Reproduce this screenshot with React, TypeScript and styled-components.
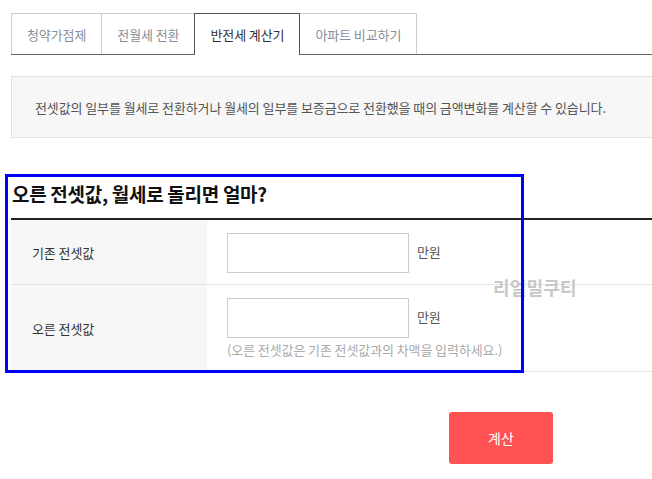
import React, { useState } from 'react'
import styled, { createGlobalStyle } from 'styled-components'

const GlobalStyle = createGlobalStyle`
    html, body {
        margin: 0;
        padding: 0;
        background: #fff;
        overflow: hidden;
    }
    body {
        font-family: "Noto Sans CJK KR", "Noto Sans", sans-serif;
        font-size: 13px;
        letter-spacing: -0.1px;
        color: #333;
    }
`

const tabs = ['청약가점제', '전월세 전환', '반전세 계산기', '아파트 비교하기']

export default function App() {
    const [active, setActive] = useState(2)

    return (
        <WPage>
            <GlobalStyle />
            <WTabBar>
                {tabs.map((name, i) => (
                    <WTab key={name} $active={i === active} onClick={() => setActive(i)}>
                        {name}
                    </WTab>
                ))}
            </WTabBar>

            <WInfoBox>
                전셋값의 일부를 월세로 전환하거나 월세의 일부를 보증금으로 전환했을 때의 금액변화를 계산할 수 있습니다.
            </WInfoBox>

            <WTitle>오른 전셋값, 월세로 돌리면 얼마?</WTitle>

            <WTable>
                <WRow>
                    <WLabelCell>기존 전셋값</WLabelCell>
                    <WValueCell>
                        <WInputLine>
                            <WInput type="text" />
                            <WUnit>만원</WUnit>
                        </WInputLine>
                    </WValueCell>
                </WRow>
                <WRow>
                    <WLabelCell>오른 전셋값</WLabelCell>
                    <WValueCell>
                        <WInputLine>
                            <WInput type="text" />
                            <WUnit>만원</WUnit>
                        </WInputLine>
                        <WHelp>(오른 전셋값은 기존 전셋값과의 차액을 입력하세요.)</WHelp>
                    </WValueCell>
                </WRow>
            </WTable>

            <WCalcButton>계산</WCalcButton>

            {/* 이미지 위 워터마크 / 파란 표시 박스 */}
            <WWatermark>리얼밀쿠티</WWatermark>
            <WHighlight />
        </WPage>
    )
}

const WPage = styled.div`
    position: relative;
    width: 980px;
    padding: 13px 0 40px 11px;
`

const WTabBar = styled.div`
    display: flex;
    align-items: flex-end;
    height: 41px;
    border-bottom: 1px solid #666;
`

const WTab = styled.div<{ $active: boolean }>`
    position: relative;
    box-sizing: border-box;
    display: flex;
    align-items: center;
    height: ${p => (p.$active ? '42px' : '41px')};
    margin-bottom: ${p => (p.$active ? '-1px' : '0')};
    margin-left: -1px;
    padding: 0 15px;
    border: 1px solid ${p => (p.$active ? '#555' : '#ccc')};
    border-bottom: none;
    background: #fff;
    color: ${p => (p.$active ? '#333' : '#8a8e96')};
    z-index: ${p => (p.$active ? 1 : 0)};
    cursor: pointer;

    &:first-child {
        margin-left: 0;
    }
`

const WInfoBox = styled.div`
    box-sizing: border-box;
    margin-top: 21px;
    height: 62px;
    padding: 0 23px;
    display: flex;
    align-items: center;
    background: #f7f7f7;
    border: 1px solid #e3e3e3;
    color: #555;
`

const WTitle = styled.h3`
    margin: 42px 0 0;
    padding: 0 0 10px 1px;
    line-height: 28px;
    font-size: 19px;
    font-weight: 700;
    letter-spacing: -0.3px;
    color: #111;
    border-bottom: 2px solid #222;
`

const WTable = styled.div`
    display: flex;
    flex-direction: column;
`

const WRow = styled.div`
    display: grid;
    grid-template-columns: 196px 1fr;
    border-bottom: 1px solid #e5e5e5;
`

const WLabelCell = styled.div`
    display: flex;
    align-items: center;
    padding-left: 21px;
    background: #f7f7f7;
    color: #333;
`

const WValueCell = styled.div`
    padding: 13px 0 11px 20px;

    &:has(p) {
        padding-bottom: 12px;
    }
`

const WInputLine = styled.div`
    display: flex;
    align-items: center;
    gap: 8px;
`

const WInput = styled.input`
    box-sizing: border-box;
    width: 182px;
    height: 40px;
    margin: 0;
    border: 1px solid #ccc;
    background: #fff;
    outline: none;
`

const WUnit = styled.span`
    color: #555;
    margin-top: -4px;
`

const WHelp = styled.p`
    margin: 3px 0 0;
    line-height: 18px;
    color: #aaa;
`

const WCalcButton = styled.button`
    display: block;
    margin: 40px auto 0;
    width: 104px;
    height: 52px;
    border: none;
    border-radius: 3px;
    background: #ff5252;
    color: #fff;
    font-family: "Noto Sans CJK KR", "Noto Sans", sans-serif;
    font-size: 14px;
    letter-spacing: 0;
    cursor: pointer;
`

const WWatermark = styled.div`
    position: absolute;
    left: 493px;
    top: 274px;
    font-size: 18px;
    font-weight: 700;
    letter-spacing: 0.2px;
    color: #c8c8c8;
    pointer-events: none;
`

const WHighlight = styled.div`
    position: absolute;
    left: 5px;
    top: 174px;
    width: 513px;
    height: 193px;
    border: 3px solid #0000ff;
    pointer-events: none;
`
